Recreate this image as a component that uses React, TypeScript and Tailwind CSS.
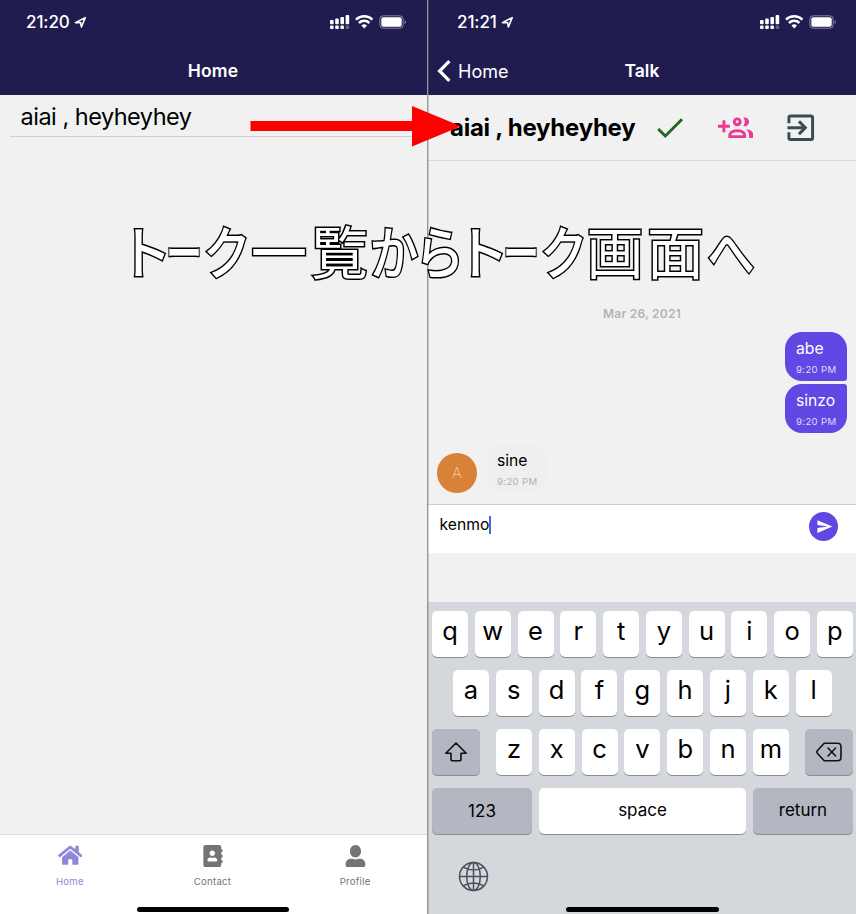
import React from "react";
import { FaAddressBook, FaHome, FaUserAlt } from "react-icons/fa";

type Glyph = { ch: string; x: number; sx: number; weight: string };

const caption: Glyph[] = [
  { ch: "ト", x: 147.2, sx: 0.95, weight: "font-medium" },
  { ch: "ー", x: 184.4, sx: 0.64, weight: "font-medium" },
  { ch: "ク", x: 226, sx: 0.84, weight: "font-medium" },
  { ch: "一", x: 278.5, sx: 0.98, weight: "font-medium" },
  { ch: "覧", x: 339.5, sx: 1, weight: "font-normal" },
  { ch: "か", x: 393.5, sx: 0.86, weight: "font-medium" },
  { ch: "ら", x: 439.8, sx: 0.88, weight: "font-medium" },
  { ch: "ト", x: 484, sx: 0.95, weight: "font-medium" },
  { ch: "ー", x: 521.2, sx: 0.64, weight: "font-medium" },
  { ch: "ク", x: 562.6, sx: 0.84, weight: "font-medium" },
  { ch: "画", x: 615, sx: 1, weight: "font-normal" },
  { ch: "面", x: 675.5, sx: 1, weight: "font-normal" },
  { ch: "へ", x: 730.5, sx: 0.84, weight: "font-medium" },
];

function StatusBar({ time, className }: { time: string; className: string }) {
  return (
    <div className={`flex h-11 items-center text-white ${className}`}>
      <span className="text-[17px] leading-5 font-medium tracking-[-0.1px]">{time}</span>
      <svg className="ml-[4px]" width="13" height="13" viewBox="0 0 13 13" fill="none" stroke="#fff" strokeWidth="1.6" strokeLinejoin="round">
        <path d="M1.4 6.6 11.2 1.6 7.4 11 6.6 6.6Z" />
      </svg>
      <svg className="ml-auto" width="77" height="16" viewBox="0 0 77 16" fill="#fff">
        <rect x="0" y="6" width="3.6" height="4.2" rx="1" />
        <rect x="5.2" y="4.4" width="3.6" height="5.8" rx="1" />
        <rect x="10.4" y="3" width="3.6" height="7.2" rx="1" />
        <rect x="15.6" y="1" width="3.6" height="9.2" rx="1" />
        <rect x="0" y="11.4" width="3.6" height="3.6" rx="1" />
        <rect x="5.2" y="11.4" width="3.6" height="3.6" rx="1" />
        <rect x="10.4" y="11.4" width="3.6" height="3.6" rx="1" />
        <rect x="15.6" y="11.4" width="3.6" height="3.6" rx="1" opacity=".3" />
        <g fill="none" stroke="#fff" strokeWidth="2.5">
          <path d="M26 5.7a11.6 11.6 0 0 1 16.4 0" />
          <path d="M29 9a7.4 7.4 0 0 1 10.4 0" />
        </g>
        <path d="m34.2 14.6-2.8-3a4.2 4.2 0 0 1 5.6 0Z" />
        <rect x="49.8" y="1.8" width="23.4" height="12.4" rx="3.4" fill="none" stroke="#fff" strokeOpacity=".45" />
        <rect x="51.3" y="3.3" width="20.4" height="9.4" rx="2" />
        <path d="M74.6 6.2V10c1.7-.8 1.7-3 0-3.8Z" opacity=".5" />
      </svg>
    </div>
  );
}

function Tab({ icon, label, className }: { icon: React.ReactNode; label: string; className: string }) {
  return (
    <div className={`flex flex-1 flex-col items-center pt-[8.5px] ${className}`}>
      <div className="flex h-6 items-center">{icon}</div>
      <span className="mt-[6px] text-[9.6px] leading-4 tracking-[0.25px]">{label}</span>
    </div>
  );
}

function HomePhone() {
  return (
    <section className="relative flex w-[428px] flex-col border-r border-[#979797]">
      <header className="h-[95px] bg-[#211c4f]">
        <StatusBar time="21:20" className="pr-[20px] pl-[26px]" />
        <h1 className="pt-[15px] pr-px text-center text-[17.5px] leading-6 font-semibold tracking-[0.2px] text-white">Home</h1>
      </header>
      <main className="flex-1 pl-[10px]">
        <div className="h-[42px] border-b border-[#cfcfcf] pl-[10.5px] text-[23.5px] leading-[43px] tracking-[-0.5px]">aiai , heyheyhey</div>
      </main>
      <nav className="flex h-[80px] border-t border-[#dcdcdc] bg-white pr-px">
        <Tab className="pr-[3px] text-[#9087d6]" label="Home" icon={<FaHome size={24.5} />} />
        <Tab className="pr-[3px] text-[#757474]" label="Contact" icon={<FaAddressBook size={22} />} />
        <Tab className="pr-px text-[#757474]" label="Profile" icon={<FaUserAlt size={22} viewBox="-16 0 544 512" preserveAspectRatio="none" style={{ width: 21 }} />} />
      </nav>
      <div className="absolute bottom-[2px] left-[137px] h-[5px] w-[152px] rounded-full bg-black" />
    </section>
  );
}

function Sent({ text }: { text: string }) {
  return (
    <div className="h-[49px] w-[62px] rounded-l-[17px] bg-[#6147e3] pt-[6px] pl-[11px] text-white first:rounded-tr-[17px] first:rounded-br-[3px] last:rounded-tr-[3px] last:rounded-br-[17px]">
      <div className="text-[15.7px] leading-[22px]">{text}</div>
      <div className="mt-[2px] text-[9.6px] leading-4 tracking-[0.35px] whitespace-nowrap text-[#e0dbfa]">9:20 PM</div>
    </div>
  );
}

function Letter({ ch }: { ch: string }) {
  return (
    <div className="h-[46px] w-[36px] rounded-[5px] bg-white text-center text-[25.5px] leading-[40px] [font-weight:370] shadow-[0_1px_0_#8a8c90]">{ch}</div>
  );
}

function Letters({ keys }: { keys: string }) {
  return (
    <>
      {keys.split("").map((k) => (
        <Letter key={k} ch={k} />
      ))}
    </>
  );
}

const darkKey = "flex h-[46px] items-center justify-center rounded-[5px] bg-[#b2b7c1] shadow-[0_1px_0_#8a8c90]";

function Keyboard() {
  return (
    <div className="relative h-[312px] bg-[#d4d7dc] pt-[8.5px] pr-[3px] pl-[4px]">
      <div className="flex flex-col gap-[13.3px]">
        <div className="flex justify-between">
          <Letters keys="qwertyuiop" />
        </div>
        <div className="flex justify-between pr-[21.4px] pl-[21px]">
          <Letters keys="asdfghjkl" />
        </div>
        <div className="flex justify-between">
          <div className={`${darkKey} w-[48px]`}>
            <svg width="24" height="22" viewBox="0 0 24 22" fill="none" stroke="#111" strokeWidth="1.6" strokeLinejoin="round">
              <path d="M12 2 1.8 12.2H7V18.6Q7 19.8 8.2 19.8H15.8Q17 19.8 17 18.6V12.2H22.2Z" />
            </svg>
          </div>
          <div className="flex w-[293px] justify-between">
            <Letters keys="zxcvbnm" />
          </div>
          <div className={`${darkKey} w-[48px]`}>
            <svg width="26" height="20" viewBox="0 0 26 20" fill="none" stroke="#111" strokeWidth="1.6" strokeLinejoin="round" strokeLinecap="round">
              <path d="M8.2 1.3H21.5Q25 1.3 25 4.8V15.2Q25 18.7 21.5 18.7H8.2L1.3 11.2Q.5 10 1.3 8.8Z" />
              <path d="m12 6 7.6 8M19.6 6 12 14" strokeWidth="1.5" />
            </svg>
          </div>
        </div>
        <div className="flex justify-between text-[17px]">
          <div className={`${darkKey} w-[100px]`}>123</div>
          <div className="h-[46px] w-[207px] rounded-[5px] bg-white text-center leading-[45px] shadow-[0_1px_0_#8a8c90]">space</div>
          <div className={`${darkKey} w-[100px] pb-px`}>return</div>
        </div>
      </div>
      <svg className="mt-[27px] ml-[26px]" width="31" height="31" viewBox="0 0 31 31" fill="none" stroke="#4b4f57" strokeWidth="1.5">
        <circle cx="15.5" cy="15.5" r="14" />
        <ellipse cx="15.5" cy="15.5" rx="6.8" ry="14" />
        <path d="M15.5 1.5v28M1.5 15.5h28M5 6.2q10.5 5.6 21 0M5 24.8q10.5-5.6 21 0" />
      </svg>
      <div className="absolute bottom-[2px] left-[138px] h-[5px] w-[153px] rounded-full bg-black" />
    </div>
  );
}

function TalkPhone() {
  return (
    <section className="flex w-[428px] flex-col">
      <header className="h-[95px] bg-[#211c4f]">
        <StatusBar time="21:21" className="pr-[19px] pl-[29px]" />
        <div className="grid grid-cols-3 items-center pt-[15px] text-[17.5px] leading-6 text-white">
          <div className="flex items-center gap-[7px] pl-[9px]">
            <svg width="14" height="22" viewBox="0 0 14 22" fill="none" stroke="#fff" strokeWidth="3.2">
              <path d="M12.4 1.2 2.6 11l9.8 9.8" />
            </svg>
            <span className="relative top-px text-[18px]">Home</span>
          </div>
          <h1 className="text-center font-semibold">Talk</h1>
        </div>
      </header>
      <div className="flex h-[66px] items-center border-b border-[#d8d8d8] pl-[22px]">
        <h2 className="w-[200px] text-[24px] font-bold tracking-[-0.25px] whitespace-nowrap">aiai , heyheyhey</h2>
        <svg className="ml-[2px]" width="35.5" height="35.5" viewBox="0 0 24 24" fill="#23671f">
          <path d="M21 7 9 19 3.5 13.5 4.91 12.09 9 16.17 19.59 5.59Z" />
        </svg>
        <svg className="ml-[30px]" width="35.5" height="35.5" viewBox="0 0 24 24" fill="#ec3a93">
          <path d="M13 11A3 3 0 1 0 10 8A3 3 0 0 0 13 11M13 7A1 1 0 1 1 12 8A1 1 0 0 1 13 7M17.11 10.86A5 5 0 0 0 17.11 5.14A2.91 2.91 0 0 1 18 5A3 3 0 0 1 18 11A2.91 2.91 0 0 1 17.11 10.86M13 13C7 13 7 17 7 17V19H19V17S19 13 13 13M9 17C9 16.71 9.32 15 13 15C16.5 15 16.94 16.56 17 17M24 17V19H21V17A5.6 5.6 0 0 0 19.2 13.06C24 13.55 24 17 24 17M8 12H5V15H3V12H0V10H3V7H5V10H8Z" />
        </svg>
        <svg className="ml-[30px]" width="35.5" height="35.5" viewBox="0 0 24 24" fill="#35504f">
          <path d="M19 3H5C3.89 3 3 3.89 3 5V9H5V5H19V19H5V15H3V19A2 2 0 0 0 5 21H19A2 2 0 0 0 21 19V5C21 3.89 20.1 3 19 3M10.08 15.58 11.5 17 16.5 12 11.5 7 10.08 8.41 12.67 11H3V13H12.67Z" />
        </svg>
      </div>
      <main className="h-[343px] pt-[144px]">
        <div className="text-center text-[12px] leading-[18px] font-semibold tracking-[0.25px] text-[#b4b4b4]">Mar 26, 2021</div>
        <div className="mt-[9px] mr-[9px] flex flex-col items-end gap-[2.5px]">
          <Sent text="abe" />
          <Sent text="sinzo" />
        </div>
        <div className="mt-[10.5px] flex items-end gap-[9px] pl-[9px]">
          <div className="flex size-[40px] items-center justify-center rounded-full bg-[#d88239] text-[15px] font-extralight text-[#f3d2b0]">A</div>
          <div className="mb-[1px] h-[49px] w-[62px] rounded-[17px] bg-[#efefef] pt-[7px] pl-[11px]">
            <div className="text-[15.7px] leading-[22px]">sine</div>
            <div className="mt-[2px] text-[9.6px] leading-4 tracking-[0.35px] whitespace-nowrap text-[#b0b0b0]">9:20 PM</div>
          </div>
        </div>
      </main>
      <div className="flex h-[49px] items-start justify-between border-t border-[#cfcfcf] bg-white pr-[18px] pl-[11.5px]">
        <div className="flex items-center pt-[10px] text-[15.7px] leading-[20px]">
          kenmo
          <span className="h-[18px] w-[2px] bg-[#4668d8]" />
        </div>
        <div className="mt-[7px] flex size-[29px] items-center justify-center rounded-full bg-[#6147e3]">
          <svg className="ml-[2px]" width="17" height="17" viewBox="0 0 24 24" fill="#fff">
            <path d="M2 21 23 12 2 3V10L17 12 2 14Z" />
          </svg>
        </div>
      </div>
      <div className="h-[49px]" />
      <Keyboard />
    </section>
  );
}

export default function App() {
  return (
    <div className="relative flex h-[914px] w-[856px] overflow-hidden bg-[#f1f1f1] text-black [font-family:Inter,'Noto_Sans_CJK_JP',sans-serif]">
      <HomePhone />
      <TalkPhone />
      <div className="absolute top-0 left-[428px] h-full w-px bg-[#808080]/35" />
      <svg className="absolute top-[106px] left-[250px]" width="212" height="41" viewBox="0 0 212 41" fill="#f00">
        <path d="M.5 15H162V0l49 20.3L162 40.5V25H.5Z" />
      </svg>
      <div className="absolute top-[221px] left-0 h-[57px] w-full text-[57px] leading-[57px] text-white [font-family:'Noto_Sans_CJK_JP',sans-serif] [font-feature-settings:'palt'] [-webkit-text-stroke:3px_#000] [paint-order:stroke_fill]">
        {caption.map((g, i) => (
          <span key={i} className={`absolute top-0 ${g.weight}`} style={{ left: g.x, transform: `translateX(-50%) scaleX(${g.sx})` }}>
            {g.ch}
          </span>
        ))}
      </div>
    </div>
  );
}
